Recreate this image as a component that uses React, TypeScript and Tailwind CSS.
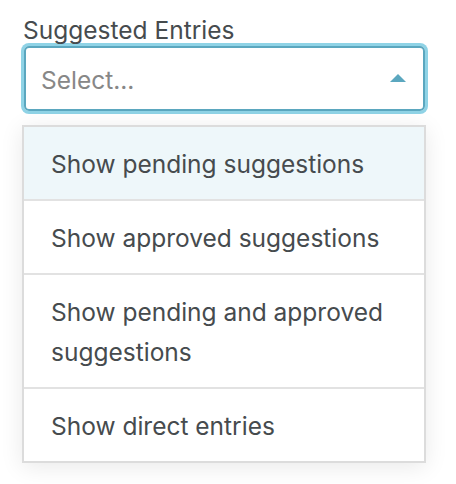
import React from "react";

const options = [
  "Show pending suggestions",
  "Show approved suggestions",
  "Show pending and approved suggestions",
  "Show direct entries",
];

export default function App() {
  return (
    <div className="w-[456px] h-[484px] bg-white pt-[15px] pl-[22px] font-['Inter',sans-serif] text-[24.5px] leading-[30px] text-[#464b4e]">
      <div className="w-[404px]">
        <div className="pl-[1px]">Suggested Entries</div>
        <div className="mt-[1px] ml-[2px] w-[401px] h-[65px] border-2 border-[#5ba7bf] rounded-[5px] shadow-[0_0_0_3px_#8fd3e6] flex items-center justify-between pl-[15px] pr-[17px]">
          <span className="text-[#878787] pt-[2px]">Select...</span>
          <svg width="16" height="8" viewBox="0 0 16 8" className="mb-[1px]">
            <path d="M0 8 L8 0 L16 8 Z" fill="#5ba7bf" />
          </svg>
        </div>
        <div className="mt-[14px] border-2 border-[#dcdcdc] bg-white shadow-[0_4px_22px_rgba(0,0,0,0.09)]">
          {options.map((o, i) => (
            <div
              key={o}
              className={
                (i === 0 ? "bg-[#eef7fa] " : "") +
                (i < options.length - 1 ? "border-b-2 border-[#e2e2e2] " : "") +
                "pt-[17px] pb-[15px] pl-[27px] pr-[20px] leading-[40px]"
              }
            >
              {o}
            </div>
          ))}
        </div>
      </div>
    </div>
  );
}
